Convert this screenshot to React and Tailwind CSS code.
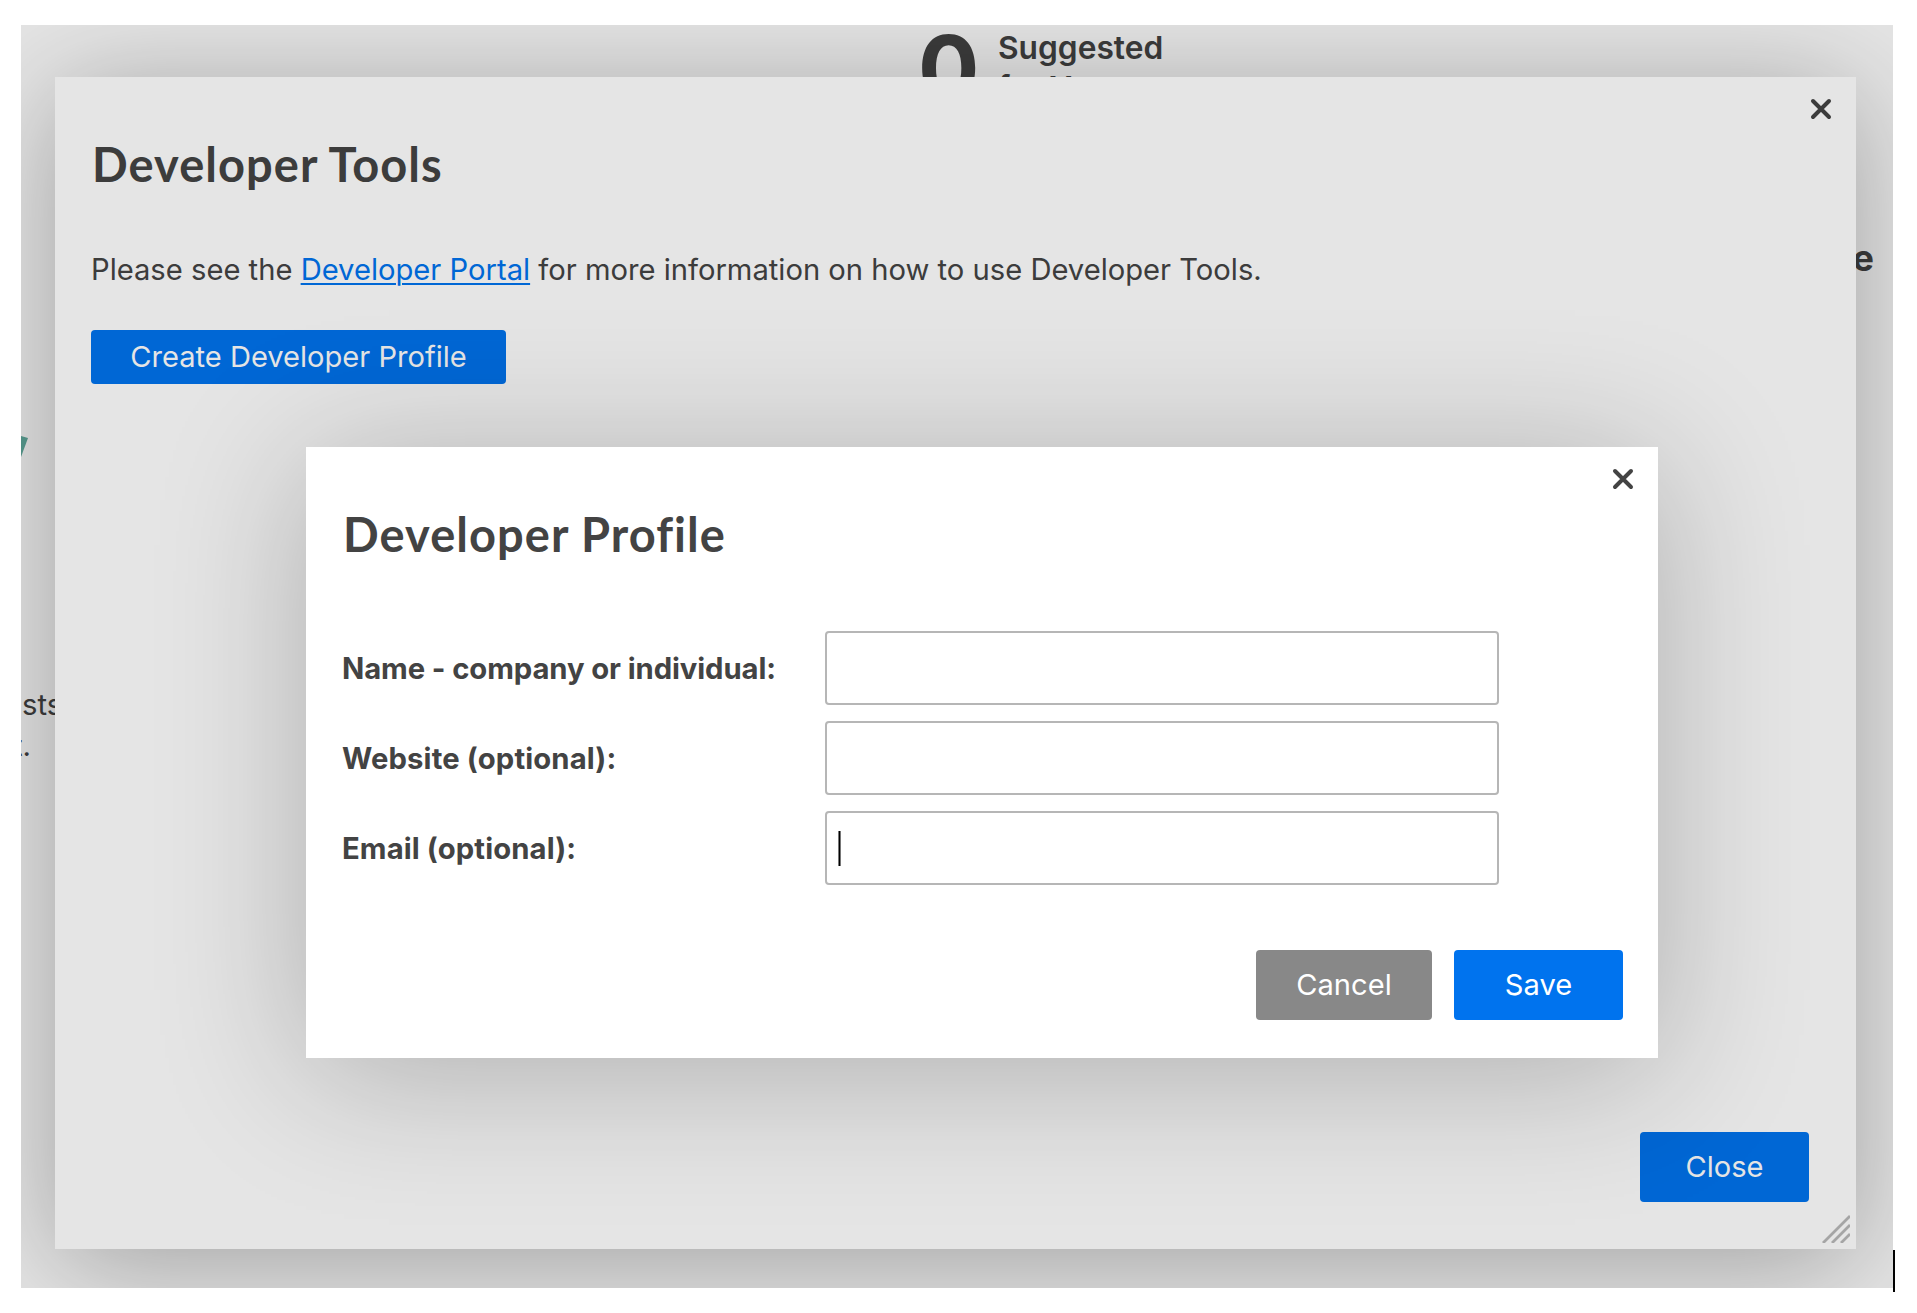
function CloseIcon() {
  return (
    <svg viewBox="0 0 24 24" className="block size-6" fill="none" stroke="#434343" strokeWidth="4" strokeLinecap="round">
      <path d="M4 4 20 20M20 4 4 20" />
    </svg>
  );
}

function DismissButton() {
  return (
    <button aria-label="Dismiss" className="absolute top-5 right-[23px]">
      <CloseIcon />
    </button>
  );
}

function Button({ className, children }) {
  return (
    <button className={`flex items-center justify-center rounded-[4px] text-[29.1px] leading-9 text-white ${className}`}>
      {children}
    </button>
  );
}

function Title({ children }) {
  return (
    <h2 className="pl-px font-[Lato,sans-serif] text-[47px] leading-14 font-bold tracking-[1.05px] whitespace-nowrap">
      {children}
    </h2>
  );
}

function Field({ label, tracking, focused }) {
  return (
    <label className="flex h-[74px] items-center">
      <span className={`w-[483px] pt-0.5 text-[29.25px] font-bold whitespace-nowrap ${tracking}`}>{label}</span>
      <span className="flex h-[74px] w-[674px] items-center rounded-[4px] border-2 border-[#b6b6b6] bg-white pl-[11px]">
        {focused && <span className="h-[35px] w-[3px] border-x border-[#777] bg-black" />}
      </span>
    </label>
  );
}

// Page content that shows around the edges of the dialogs
function Backdrop() {
  return (
    <>
      <div className="absolute top-[-12px] left-[897px] text-[91px] leading-[110px] font-bold">0</div>
      <div className="absolute top-[3px] left-[977px] text-[31.7px] leading-[40px] font-semibold">
        Suggested
        <br />
        for You
      </div>
      <div className="absolute top-[211px] right-[19px] text-[36px] leading-[44px] font-bold">e</div>
      <svg viewBox="0 0 8 22" className="absolute top-[411px] left-0 h-[22px] w-2">
        <path d="M0 0 7 2 0 21Z" fill="#62ac9f" />
      </svg>
      <div className="absolute top-[659px] left-0 text-[29.25px] leading-[41px]">
        <div className="pl-px">sts</div>
        <div className="ml-[-8px]">t.</div>
      </div>
    </>
  );
}

export default function App() {
  return (
    <div className="relative h-[1313px] w-[1917px] overflow-hidden bg-white pt-[25px] pl-[21px] font-[Inter,sans-serif] text-[#434343]">
      <div className="relative h-[1263px] w-[1872px] overflow-hidden bg-white">
        <Backdrop />

        <section className="absolute top-[52px] left-[34px] flex h-[1172px] w-[1801px] flex-col bg-white pt-[59px] pr-[47px] pb-[47px] pl-[36px] shadow-[0_15px_110px_rgba(0,0,0,0.3)]">
          <DismissButton />
          <Title>Developer Tools</Title>
          <p className="mt-[60px] text-[29.18px] leading-9 whitespace-nowrap">
            Please see the{" "}
            <a className="text-[#0073ee] underline decoration-2 underline-offset-[3px]">Developer Portal</a> for more
            information on how to use Developer Tools.
          </p>
          <Button className="mt-[42px] h-[54px] w-[415px] bg-[#0073ee]">Create Developer Profile</Button>
          <Button className="mt-auto h-[70px] w-[169px] self-end bg-[#0073ee]">Close</Button>
          <svg viewBox="0 0 28 28" className="absolute right-[6px] bottom-[6px] size-7" stroke="#b8b8b8" strokeWidth="2.8">
            <path d="M1 28 28 1M10 28 28 10M19 28 28 19" />
          </svg>
        </section>

        <div className="absolute inset-0 bg-black/10" />

        <section className="absolute top-[422px] left-[285px] h-[611px] w-[1352px] bg-white pt-[59px] pr-[35px] pl-[36px] shadow-[0_15px_140px_rgba(0,0,0,0.24)]">
          <DismissButton />
          <Title>Developer Profile</Title>
          <div className="mt-[69px] flex flex-col gap-4">
            <Field label="Name - company or individual:" tracking="tracking-[-0.1px]" />
            <Field label="Website (optional):" tracking="tracking-[0.12px]" />
            <Field label="Email (optional):" tracking="tracking-[0.1px]" focused />
          </div>
          <div className="mt-[65px] flex justify-end gap-[22px]">
            <Button className="h-[70px] w-[176px] bg-[#888]">Cancel</Button>
            <Button className="h-[70px] w-[169px] bg-[#0073ee]">Save</Button>
          </div>
        </section>
      </div>
      <div className="absolute top-[1250px] left-[1893px] h-[42px] w-0.5 bg-black" />
    </div>
  );
}
